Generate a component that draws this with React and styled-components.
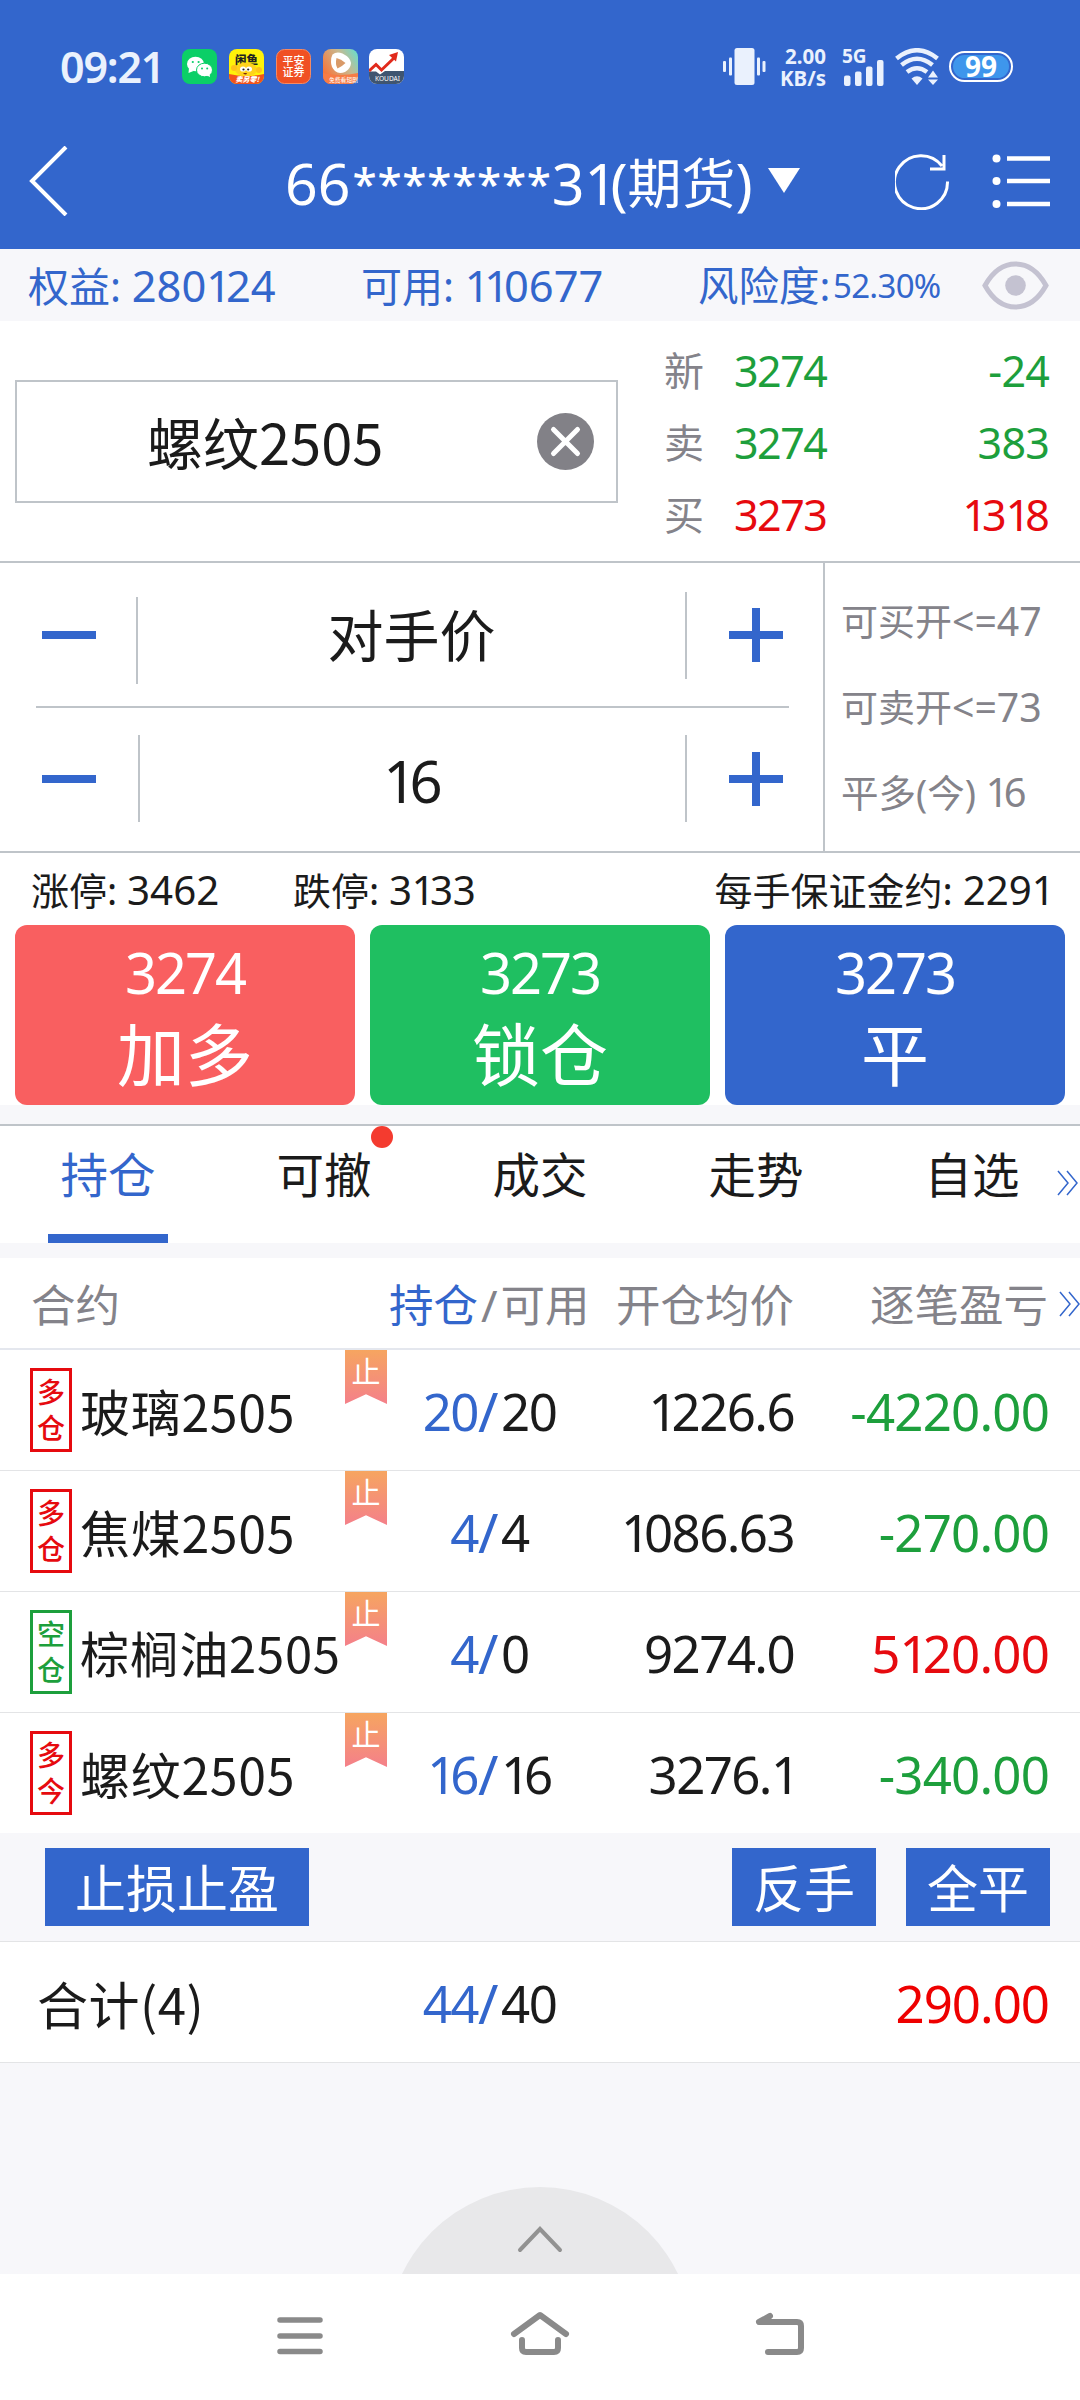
import React from "react";
import styled, { createGlobalStyle } from "styled-components";

const GlobalStyle = createGlobalStyle`
  * {
    box-sizing: border-box;
  }
  body {
    margin: 0;
    background: #f7f7fa;
    font-family: "Noto Sans", "Noto Sans CJK SC", sans-serif;
    color: #1b1b1b;
  }
`

const BLUE = "#3366cc";
const GREEN = "#1d9f3c";
const RED = "#e60a0f";
const GRAY = "#84838a";
const LINE = "#bfc4c9";

const Screen = styled.div`
  width: 1080px;
  height: 2400px;
  display: flex;
  flex-direction: column;
  overflow: hidden;
`
// one run of text: size, tracking and a small baseline nudge
const Text = styled.span`
  display: block;
  white-space: pre;
  font-size: ${(p) => p.$size}px;
  line-height: 1.3;
  letter-spacing: ${(p) => p.$track || 0}px;
  color: ${(p) => p.$color || "inherit"};
  font-weight: ${(p) => p.$weight || 400};
  margin-top: ${(p) => p.$dy || 0}px;
`
const CjkText = styled(Text)`
  font-family: "Noto Sans CJK SC", sans-serif;
`
const Digits = styled.span`
  font-size: 1.06em;
  letter-spacing: ${(p) => p.$track || 0}px;
`
const One = styled.span`
  letter-spacing: -0.12em;
`
const Accent = styled.span`
  color: ${BLUE};
`
const Slash = styled.span`
  padding: 0 3px;
`

/* header */
const Header = styled.header`
  height: 249px;
  background: ${BLUE};
  color: #fff;
  flex: none;
`
const StatusBar = styled.div`
  height: 133px;
  padding: 0 67px 0 60px;
  display: flex;
  align-items: center;
  color: #eaf1fd;
`
const AppIcons = styled.div`
  display: flex;
  gap: 11.8px;
  margin-left: 18px;
  flex: 1;
`
const Speed = styled.div`
  width: 48px;
  margin: 0 16px 0 12px;
  display: flex;
  flex-direction: column;
  align-items: flex-end;
  font-size: 20.5px;
  line-height: 22px;
  font-weight: 700;
`
const Signal = styled.div`
  width: 44px;
  height: 38px;
  margin-right: 9px;
  display: flex;
  flex-direction: column;
  font-size: 19px;
  line-height: 16px;
  font-weight: 700;
`
const Bars = styled.svg`
  margin: -4px 0 0 2px;
`
const Battery = styled.div`
  width: 64px;
  height: 31px;
  margin-left: 10px;
  border: 2px solid #fff;
  border-radius: 16px;
  padding: 2px;
  display: flex;
`
const Charge = styled.div`
  flex: 1;
  border-radius: 12px;
  background: #3e96ec;
  color: #fff;
  font-size: 28px;
  line-height: 23px;
  font-weight: 700;
  text-align: center;
`
const NavBar = styled.div`
  height: 96px;
  padding: 0 30px 0 29px;
  display: flex;
  align-items: center;
`
const Title = styled.div`
  flex: 1;
  padding: 3px 0 0 216px;
  display: flex;
  align-items: center;
  font-size: 54px;
  line-height: 80px;
  white-space: pre;
`
const Stars = styled.span`
  margin-left: 2px;
  font-size: 44px;
  font-weight: 500;
  letter-spacing: 0.8px;
`
const Caret = styled.svg`
  margin: -4px 0 0 15px;
`

/* account */
const AccountBar = styled.div`
  height: 72px;
  flex: none;
  background: #f7f7fa;
  color: ${BLUE};
  display: grid;
  grid-template-columns: 333px 337px 135px 1fr auto;
  align-items: center;
  padding: 0 31px 0 28px;
`

/* quote */
const QuotePanel = styled.section`
  height: 240px;
  flex: none;
  background: #fff;
  display: flex;
  align-items: center;
  padding: 0 31px 0 15px;
`
const ContractInput = styled.div`
  width: 603px;
  height: 123px;
  border: 2px solid ${LINE};
  display: flex;
  align-items: center;
  justify-content: space-between;
  padding: 0 22px 0 130px;
`
const Quotes = styled.div`
  flex: 1;
  margin-left: 46px;
  padding-top: 4px;
`
const Quote = styled.div`
  height: 72px;
  display: grid;
  grid-template-columns: 70px 1fr auto;
  align-items: center;
`

/* order form */
const OrderPanel = styled.section`
  height: 292px;
  flex: none;
  background: #fff;
  border-top: 2px solid ${LINE};
  border-bottom: 2px solid ${LINE};
  display: flex;
`
const Steppers = styled.div`
  width: 825px;
  border-right: 2px solid ${LINE};
`
const Stepper = styled.div`
  height: 144px;
  display: grid;
  grid-template-columns: 54px ${(p) => p.$inset}px 2px 1fr 2px 42px 54px;
  align-items: center;
  padding: 0 40px 0 42px;
`
const Rule = styled.div`
  grid-column: ${(p) => p.$col};
  grid-row: 1;
  height: 87px;
  margin-top: ${(p) => p.$dy || 0}px;
  background: ${LINE};
`
const Divider = styled.div`
  height: 2px;
  margin: -1px 34px -1px 36px;
  background: ${LINE};
`
const Value = styled.div`
  grid-column: 4;
  grid-row: 1;
  display: flex;
  justify-content: center;
`
const Minus = styled.div`
  width: 54px;
  height: 8px;
  background: ${BLUE};
`
const Plus = styled.svg`
  grid-column: 7;
  grid-row: 1;
`
const Capacity = styled.div`
  flex: 1;
  padding: 14px 0 0 16px;
  color: ${GRAY};
`
const CapacityLine = styled.div`
  height: 86.5px;
  display: flex;
  align-items: center;
`
const Limits = styled.div`
  height: 72px;
  flex: none;
  background: #fff;
  display: grid;
  grid-template-columns: 262px 1fr auto;
  align-items: center;
  padding: 3px 30px 0 31px;
`

/* trade buttons */
const TradeButtons = styled.div`
  height: 180px;
  flex: none;
  display: grid;
  grid-template-columns: repeat(3, 340px);
  gap: 15px;
  padding: 0 15px;
  background: #fff;
`
const TradeButton = styled.button`
  border: 0;
  border-radius: 12px;
  padding: 0;
  background: ${(p) => p.$bg};
  color: #fff;
  font-family: inherit;
  display: flex;
  flex-direction: column;
  align-items: center;
`

/* tabs */
const Tabs = styled.nav`
  height: 119px;
  margin-top: 19px;
  flex: none;
  border-top: 2px solid ${LINE};
  background: #fff;
  display: grid;
  grid-template-columns: repeat(5, 216px);
  position: relative;
`
const Tab = styled.div`
  position: relative;
  display: flex;
  flex-direction: column;
  align-items: center;
  justify-content: space-between;
  color: ${(p) => (p.$active ? BLUE : "inherit")};

  &::after {
    content: "";
    width: 120px;
    height: 9px;
    background: ${(p) => (p.$active ? BLUE : "transparent")};
  }
`
const Dot = styled.i`
  position: absolute;
  top: 0;
  left: 155px;
  width: 22px;
  height: 22px;
  border-radius: 50%;
  background: #f43b2f;
`
const TabsMore = styled.svg`
  position: absolute;
  right: 1px;
  top: 44px;
`

/* positions */
const Table = styled.section`
  margin-top: 15px;
  flex: none;
`
const HeadRow = styled.div`
  height: 92px;
  background: #fff;
  border-bottom: 2px solid #e4e7ee;
  color: ${GRAY};
  display: grid;
  grid-template-columns: 389px 200px 205px 1fr;
  align-items: center;
  padding: 3px 32px 0 0;
  position: relative;
`
const HeadMore = styled.svg`
  position: absolute;
  right: -1px;
  top: 33px;
`
const Row = styled.div`
  height: ${(p) => (p.$last ? 120 : 121)}px;
  background: #fff;
  border-bottom: ${(p) => (p.$last ? "none" : "1px solid #e3e4e6")};
  display: grid;
  grid-template-columns: 387px 205px 202px 1fr;
  padding-right: 31px;
`
const Contract = styled.div`
  display: flex;
  align-items: center;
  padding-left: ${(p) => p.$pad || 30}px;
  position: relative;
`
const Side = styled.div`
  width: 42px;
  height: 84px;
  margin-right: 8px;
  border: 3px solid ${(p) => p.$color};
  color: ${(p) => p.$color};
  display: flex;
  flex-direction: column;
  align-items: center;
  justify-content: center;
  font-size: 28px;
  line-height: 36px;
  font-weight: 500;
`
const StopTag = styled.div`
  position: absolute;
  right: 0;
  top: 0;
  width: 42px;
  height: 54px;
  background: linear-gradient(#f6a560, #f4808a);
  clip-path: polygon(0 0, 100% 0, 100% 100%, 50% 82%, 0 100%);
  color: #fff;
  text-align: center;
  font-size: 29px;
  line-height: 44px;
`
const Lots = styled.div`
  display: grid;
  grid-template-columns: 91px 23px 1fr;
  align-items: center;
  padding-top: 2px;
`
const Right = styled.div`
  display: flex;
  align-items: center;
  justify-content: flex-end;
`
const ActionRow = styled.div`
  height: 109px;
  border-bottom: 1px solid #e3e4e6;
  background: #f7f7fa;
  display: flex;
  align-items: center;
  gap: 30px;
  padding: 0 30px 0 45px;
`
const ActionButton = styled.button`
  width: ${(p) => p.$width}px;
  height: 78px;
  margin-right: ${(p) => (p.$push ? "auto" : 0)};
  border: 0;
  padding: 0;
  background: ${BLUE};
  color: #fff;
  font-family: inherit;
  display: flex;
  align-items: center;
  justify-content: center;
`

/* bottom */
const Drawer = styled.div`
  flex: 1;
  display: flex;
  justify-content: center;
  align-items: flex-end;
  background: #f7f7fa;
`
const SystemNav = styled.footer`
  height: 126px;
  flex: none;
  background: #fff;
  display: flex;
  justify-content: center;
  align-items: center;
  gap: 180px;
`

function WechatIcon() {
  return (
    <svg width="35" height="35" viewBox="0 0 35 35">
      <rect width="35" height="35" rx="8" fill="#0bcf67" />
      <ellipse cx="13.5" cy="15" rx="8.5" ry="7.3" fill="#fff" />
      <path d="M7 19l-.5 5 5-2z" fill="#fff" />
      <ellipse cx="22.5" cy="21" rx="8" ry="6.8" fill="#fff" stroke="#0bcf67" />
      <path d="M24 26l4 2-.5-4z" fill="#fff" />
      <circle cx="10.8" cy="13" r="1.1" fill="#0bcf67" />
      <circle cx="16.6" cy="13" r="1.1" fill="#0bcf67" />
      <circle cx="20" cy="19.6" r="1" fill="#0bcf67" />
      <circle cx="25.2" cy="19.6" r="1" fill="#0bcf67" />
    </svg>
  );
}

function XianyuIcon() {
  return (
    <svg width="35" height="35" viewBox="0 0 35 35" fontFamily="Noto Sans CJK SC">
      <clipPath id="xy"><rect width="35" height="35" rx="8" /></clipPath>
      <g clipPath="url(#xy)">
        <rect width="35" height="35" fill="#fff20a" />
        <path d="M0 25q17 4 35 0v10H0z" fill="#f2521b" />
        <text x="6" y="14.5" fontSize="11.5" fontWeight="900" fill="#222">闲鱼</text>
        <ellipse cx="17" cy="20.5" rx="11" ry="7" fill="#ffd21c" />
        <circle cx="5" cy="19" r="3" fill="#ffc21a" />
        <circle cx="30" cy="21" r="3" fill="#ffc21a" />
        <ellipse cx="14" cy="20" rx="3" ry="2.6" fill="#fff" />
        <ellipse cx="20" cy="20" rx="3" ry="2.6" fill="#fff" />
        <circle cx="14.5" cy="20.5" r="1.1" fill="#222" />
        <circle cx="19.2" cy="20.5" r="1.1" fill="#222" />
        <path d="M14 24q3 3 4 0z" fill="#7a2410" />
        <text x="6.5" y="33" fontSize="7" fontWeight="900" fill="#fff" fontStyle="italic">卖另零!</text>
      </g>
    </svg>
  );
}

function PinganIcon() {
  return (
    <svg width="35" height="35" viewBox="0 0 35 35" fontFamily="Noto Sans CJK SC">
      <rect x=".5" y=".5" width="34" height="34" rx="8" fill="#f05023" stroke="#f58a63" />
      <text x="6.500" y="16.400" fontSize="11" fontWeight="500" fill="#fff">平安</text>
      <text x="6.500" y="27.200" fontSize="11" fontWeight="500" fill="#fff">证券</text>
    </svg>
  );
}

function VideoIcon() {
  return (
    <svg width="35" height="35" viewBox="0 0 35 35" fontFamily="Noto Sans CJK SC">
      <defs>
        <linearGradient id="vid" x1="0" y1=".6" x2="1" y2="0">
          <stop offset="0" stopColor="#f5773c" />
          <stop offset=".55" stopColor="#c9b88e" />
          <stop offset="1" stopColor="#5fe0d3" />
        </linearGradient>
      </defs>
      <rect width="35" height="35" rx="8" fill="url(#vid)" />
      <path d="M0 24q17 4 35 0v3a8 8 0 0 1-8 8H8a8 8 0 0 1-8-8z" fill="#f77c45" />
      <path d="M9.500 5.500q4-3.500 10-1 8 4 8.500 9.500-.5 6-6 9-6 2.500-10-1-4-4-4-9 0-5 1.500-7.500z" fill="#fff" />
      <path d="M13.500 9q4.500 1 9 5-4 4-8 5.500-2.500-4-1-10.500z" fill="#d99a68" />
      <text x="6" y="33" fontSize="5.800" fill="#fff">免费看短剧</text>
    </svg>
  );
}

function KoudaiIcon() {
  return (
    <svg width="35" height="35" viewBox="0 0 35 35">
      <clipPath id="kd"><rect width="35" height="35" rx="8" /></clipPath>
      <g clipPath="url(#kd)">
        <rect width="35" height="35" fill="#fff" />
        <path d="M0 22.500h7l4 3 5-3.500h19v13H0z" fill="#3f5570" />
        <path d="M0 22l7-6.500 5.500 5.500L25 9" fill="none" stroke="#e12a1c" strokeWidth="3" />
        <path d="M20 6l9-3-2 9.500z" fill="#e12a1c" />
        <text x="6" y="31.500" fontSize="6.600" fill="#fff" fontFamily="Noto Sans">KOUDAI</text>
      </g>
    </svg>
  );
}

function VibrateIcon() {
  return (
    <svg width="43" height="37" viewBox="0 0 43 37" fill="#eaf1fd">
      <rect x="11.500" y="0" width="20" height="37" rx="2.500" />
      <rect x="0" y="13" width="3" height="11" rx="1" />
      <rect x="6" y="9.500" width="3" height="18" rx="1" />
      <rect x="34" y="9.500" width="3" height="18" rx="1" />
      <rect x="39.500" y="13" width="3" height="11" rx="1" />
    </svg>
  );
}

function WifiIcon() {
  return (
    <svg width="44" height="37" viewBox="0 0 44 37" fill="none" stroke="#eaf1fd" strokeWidth="4.500">
      <path d="M1.500 10.500Q22-6 42.500 10.500" />
      <path d="M6.500 17Q22 4.500 37.500 17" />
      <path d="M12 24Q22 16.500 32 24" />
      <path d="M16.500 30.500q5.500-4.500 11 0l-5.500 6.500z" fill="#eaf1fd" stroke="none" />
      <path d="M33 29.500l5-7 5 7zM33 31.500h10l-5 5.500z" fill="#eaf1fd" stroke="none" />
    </svg>
  );
}

function EyeIcon() {
  return (
    <svg width="67" height="49" viewBox="0 0 67 49">
      <path d="M3 24.500Q15 3 33.500 3T64 24.500Q52 46 33.500 46T3 24.500z" fill="none" stroke="#c4c2d1" strokeWidth="5" />
      <circle cx="33.500" cy="24.500" r="10.300" fill="#c4c2d1" />
    </svg>
  );
}

function PlusIcon() {
  return (
    <Plus width="54" height="54" viewBox="0 0 54 54">
      <path d="M0 27h54M27 0v54" stroke={BLUE} strokeWidth="8" />
    </Plus>
  );
}

// the digit 1 takes less room than the other digits
function tight(value) {
  return value.split("").map((c, i) => (c === "1" ? <One key={i}>1</One> : c));
}

const chevrons = "M1 1l10 12L1 25M10 1l10 12-10 12";

const quotes = [
  { label: "新", price: "3274", amount: "-24", color: GREEN },
  { label: "卖", price: "3274", amount: "383", color: GREEN },
  { label: "买", price: "3273", amount: "1318", color: RED },
];

const trades = [
  { price: "3274", label: "加多", bg: "#f95f60" },
  { price: "3273", label: "锁仓", bg: "#1fbf61" },
  { price: "3273", label: "平", bg: BLUE },
];

const tabs = ["持仓", "可撤", "成交", "走势", "自选"];

const positions = [
  { side: "多仓", name: "玻璃2505", lots: "20", free: "20", avg: "1226.6", pnl: "-4220.00", size: 50 },
  { side: "多仓", name: "焦煤2505", lots: "4", free: "4", avg: "1086.63", pnl: "-270.00", size: 50 },
  { side: "空仓", name: "棕榈油2505", lots: "4", free: "0", avg: "9274.0", pnl: "5120.00", size: 49 },
  { side: "多今", name: "螺纹2505", lots: "16", free: "16", avg: "3276.1", pnl: "-340.00", size: 50 },
];

function LotsCell({ lots, free }) {
  return (
    <Lots>
      <Right><Text $size={51} $track={-1.500} $color={BLUE}>{tight(lots)}</Text></Right>
      <Text $size={55} $color={BLUE}>/</Text>
      <Text $size={51} $track={-1.500}>{tight(free)}</Text>
    </Lots>
  );
}

function PositionRow({ item, last }) {
  const sideColor = item.side[0] === "多" ? RED : GREEN;
  return (
    <Row $last={last}>
      <Contract>
        <Side $color={sideColor}>
          <span>{item.side[0]}</span>
          <span>{item.side[1]}</span>
        </Side>
        <CjkText $size={item.size} $track={0.700}>{item.name}</CjkText>
        <StopTag>止</StopTag>
      </Contract>
      <LotsCell lots={item.lots} free={item.free} />
      <Right><Text $size={51} $dy={2} $track={-1.600}>{tight(item.avg)}</Text></Right>
      <Right>
        <Text $size={51} $dy={2} $track={-0.800} $color={item.pnl[0] === "-" ? GREEN : RED}>{tight(item.pnl)}</Text>
      </Right>
    </Row>
  );
}

function App() {
  return (
    <Screen>
      <GlobalStyle />
      <Header>
        <StatusBar>
          <Text $size={43} $weight={600} $track={-1.200}>09:21</Text>
          <AppIcons>
            <WechatIcon />
            <XianyuIcon />
            <PinganIcon />
            <VideoIcon />
            <KoudaiIcon />
          </AppIcons>
          <VibrateIcon />
          <Speed>
            <span>2.00</span>
            <span>KB/s</span>
          </Speed>
          <Signal>
            <span>5G</span>
            <Bars width="40" height="26" viewBox="0 0 40 26" fill="#eaf1fd">
              <rect x="0" y="15.500" width="6.500" height="10.500" rx="2" />
              <rect x="11" y="11.500" width="6.500" height="14.500" rx="2" />
              <rect x="22" y="6.500" width="6.500" height="19.500" rx="2" />
              <rect x="33" y="0" width="6.500" height="26" rx="2" />
            </Bars>
          </Signal>
          <WifiIcon />
          <Battery><Charge>99</Charge></Battery>
        </StatusBar>
        <NavBar>
          <svg width="40" height="70" viewBox="0 0 40 70">
            <path d="M37 1L3 35l34 34" fill="none" stroke="#fff" strokeWidth="4" />
          </svg>
          <Title>
            <Digits>66</Digits>
            <Stars>********</Stars>
            <Digits>3{tight("1")}(</Digits>期货<Digits>)</Digits>
            <Caret width="32" height="26" viewBox="0 0 32 26"><path d="M0 0h32L16 25z" fill="#fff" /></Caret>
          </Title>
          <svg width="155" height="58" viewBox="0 0 155 58" fill="none" stroke="#fff" strokeWidth="3">
            <path d="M52.500 29.500A26.500 26.500 0 1 1 47 14M49 3v14H35" />
            <path d="M112 6.500h43M112 29h43M112 52h43" strokeWidth="4.500" />
            <g fill="#fff" stroke="none">
              <circle cx="101.500" cy="6.500" r="4" />
              <circle cx="101.500" cy="29" r="4" />
              <circle cx="101.500" cy="52" r="4" />
            </g>
          </svg>
        </NavBar>
      </Header>

      <AccountBar>
        <Text $size={41} $dy={2}>权益: <Digits>{tight("280124")}</Digits></Text>
        <Text $size={41} $dy={2}>可用: <Digits>{tight("110677")}</Digits></Text>
        <Text $size={40.500} $dy={2}>风险度:</Text>
        <Text $size={33} $dy={2} $track={-0.700}>52.30%</Text>
        <EyeIcon />
      </AccountBar>

      <QuotePanel>
        <ContractInput>
          <CjkText $size={56}>螺纹2505</CjkText>
          <svg width="57" height="57" viewBox="0 0 57 57">
            <circle cx="28.500" cy="28.500" r="28.500" fill="#828187" />
            <path d="M16.500 16.500l24 24M40.500 16.500l-24 24" stroke="#fff" strokeWidth="5" strokeLinecap="round" />
          </svg>
        </ContractInput>
        <Quotes>
          {quotes.map((q) => (
            <Quote key={q.label}>
              <Text $size={40} $color={GRAY}>{q.label}</Text>
              <Text $size={43} $track={-1.500} $color={q.color}>{q.price}</Text>
              <Text $size={43} $track={-0.800} $color={q.color}>{tight(q.amount)}</Text>
            </Quote>
          ))}
        </Quotes>
      </QuotePanel>

      <OrderPanel>
        <Steppers>
          <Stepper $inset={40}>
            <Minus />
            <Rule $col={3} $dy={10} />
            <Value><Text $size={56} $dy={1}>对手价</Text></Value>
            <Rule $col={5} />
            <PlusIcon />
          </Stepper>
          <Divider />
          <Stepper $inset={42}>
            <Minus />
            <Rule $col={3} $dy={-2} />
            <Value><Text $size={58} $track={-1} $dy={4}>{tight("16")}</Text></Value>
            <Rule $col={5} $dy={-2} />
            <PlusIcon />
          </Stepper>
        </Steppers>
        <Capacity>
          <CapacityLine><Text $size={37}>可买开<Digits>&lt;=47</Digits></Text></CapacityLine>
          <CapacityLine><Text $size={37}>可卖开<Digits>&lt;=73</Digits></Text></CapacityLine>
          <CapacityLine><Text $size={37.500}>平多(今) <Digits>{tight("16")}</Digits></Text></CapacityLine>
        </Capacity>
      </OrderPanel>

      <Limits>
        <Text $size={38}>涨停: <Digits>3462</Digits></Text>
        <Text $size={38}>跌停: <Digits $track={-0.300}>{tight("3133")}</Digits></Text>
        <Text $size={38}>每手保证金约: <Digits>{tight("2291")}</Digits></Text>
      </Limits>

      <TradeButtons>
        {trades.map((t) => (
          <TradeButton key={t.label} $bg={t.bg}>
            <Text $size={56} $track={-2} $dy={11}>{t.price}</Text>
            <Text $size={68} $dy={2}>{t.label}</Text>
          </TradeButton>
        ))}
      </TradeButtons>

      <Tabs>
        {tabs.map((tab, i) => (
          <Tab key={tab} $active={i === 0}>
            <Text $size={47.500} $dy={18}>{tab}</Text>
            {tab === "可撤" && <Dot />}
          </Tab>
        ))}
        <TabsMore width="22" height="26" viewBox="0 0 22 26">
          <path d={chevrons} fill="none" stroke={BLUE} strokeWidth="1.500" />
        </TabsMore>
      </Tabs>

      <Table>
        <HeadRow>
          <Contract $pad={31}><Text $size={44.500}>合约</Text></Contract>
          <Text $size={44.500}><Accent>持仓</Accent><Slash>/</Slash>可用</Text>
          <Right><Text $size={44.500}>开仓均价</Text></Right>
          <Right><Text $size={44.500}>逐笔盈亏</Text></Right>
          <HeadMore width="22" height="26" viewBox="0 0 22 26">
            <path d={chevrons} fill="none" stroke={BLUE} strokeWidth="1.500" />
          </HeadMore>
        </HeadRow>
        {positions.map((item, i) => (
          <PositionRow key={item.name} item={item} last={i === positions.length - 1} />
        ))}
        <ActionRow>
          <ActionButton $width={264} $push><Text $size={51} $dy={2}>止损止盈</Text></ActionButton>
          <ActionButton $width={144}><Text $size={51} $dy={2}>反手</Text></ActionButton>
          <ActionButton $width={144}><Text $size={51} $dy={2}>全平</Text></ActionButton>
        </ActionRow>
        <Row>
          <Contract $pad={37}><CjkText $size={51} $dy={2} $track={0.500}>合计(4)</CjkText></Contract>
          <LotsCell lots="44" free="40" />
          <span />
          <Right><Text $size={51} $dy={2} $track={-1} $color="#ee0000">290.00</Text></Right>
        </Row>
      </Table>

      <Drawer>
        <svg width="280" height="87" viewBox="0 0 280 87">
          <circle cx="140" cy="153" r="153" fill="#e8e8ea" />
          <path d="M120 63l20-21 20 21" fill="none" stroke="#929292" strokeWidth="4" strokeLinecap="round" />
        </svg>
      </Drawer>

      <SystemNav>
        <svg width="60" height="60" viewBox="0 0 60 60" fill="none" stroke="#8a8a8a" strokeWidth="5.500" strokeLinecap="round">
          <path d="M10 13h40M10 29h40M10 44.500h40" />
        </svg>
        <svg width="60" height="60" viewBox="0 0 60 60" fill="none" stroke="#8a8a8a" strokeWidth="6" strokeLinecap="round" strokeLinejoin="round">
          <path d="M4 27L30 8l26 19M12 33v8q0 4 4 4h28q4 0 4-4v-8" />
        </svg>
        <svg width="60" height="60" viewBox="0 0 60 60" fill="none" stroke="#8a8a8a" strokeWidth="6" strokeLinecap="round" strokeLinejoin="round">
          <path d="M20 9L9 15h38q4 0 4 4v22q0 4-4 4H18" />
        </svg>
      </SystemNav>
    </Screen>
  );
}

export default App;
